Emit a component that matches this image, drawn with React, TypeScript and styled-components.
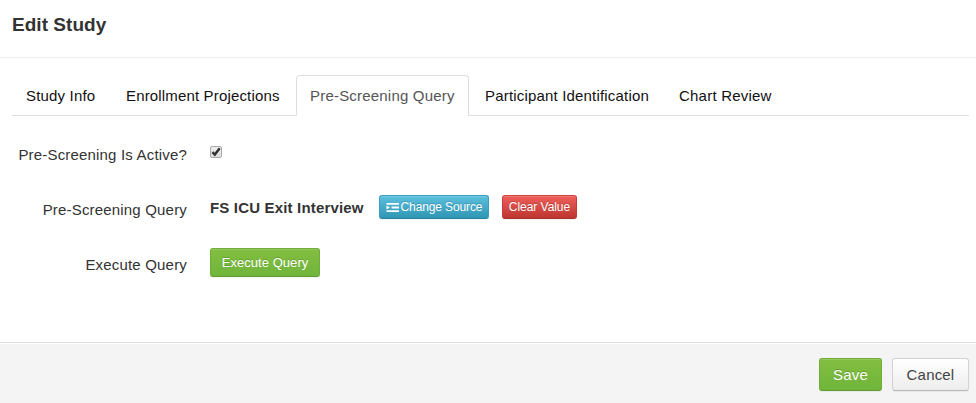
import React from "react";
import styled, { createGlobalStyle, css } from "styled-components";

const GlobalStyle = createGlobalStyle`
  * { box-sizing: border-box; }
  body {
    margin: 0;
    background: #fff;
    color: #333;
    font: 15px/20px "Liberation Sans", Arial, sans-serif;
  }
`;

const Page = styled.div`
  display: flex;
  flex-direction: column;
  height: 403px;
  overflow: hidden;
`;

const Header = styled.header`
  height: 58px;
  padding: 10px 12px 0;
  border-bottom: 1px solid #eee;
`;

const Title = styled.h3`
  margin: 0;
  font-size: 19px;
  line-height: 29px;
  font-weight: bold;
  letter-spacing: 0.04px;
`;

const Text = styled.span<{ $spacing?: number }>`
  letter-spacing: ${(p) => p.$spacing ?? 0.18}px;
  white-space: nowrap;
`;

const Tabs = styled.nav`
  display: flex;
  height: 41px;
  margin: 17px 7px 0 12px;
  border-bottom: 1px solid #ddd;
`;

const Tab = styled.a<{ $active?: boolean; $width: number }>`
  width: ${(p) => p.$width}px;
  height: 41px;
  margin-right: 2px;
  padding: 10px 0 0 13px;
  border: 1px solid transparent;
  border-radius: 4px 4px 0 0;
  color: #111;
  ${(p) =>
    p.$active &&
    css`
      color: #555;
      background: #fff;
      border-color: #ddd #ddd #fff;
    `}
`;

const Form = styled.main`
  flex: 1;
  padding-top: 26px;
`;

const Row = styled.div`
  display: flex;
  align-items: flex-start;
  height: 55px;
`;

const Label = styled.label`
  width: 187px;
  margin-right: 23px;
  padding-top: 3px;
  text-align: right;
`;

const Controls = styled.div<{ $top?: number }>`
  display: flex;
  align-items: flex-start;
  margin-top: ${(p) => p.$top ?? 0}px;
`;

const CheckBox = styled.span`
  display: block;
  width: 12px;
  height: 12px;
  border: 1px solid #aaa;
  border-radius: 2px;
  background: linear-gradient(#eee, #dedede);
  svg {
    display: block;
    overflow: visible;
  }
`;

const Value = styled.strong`
  width: 169px;
  padding-top: 3px;
  white-space: nowrap;
`;

const tones = {
  info: "border-color:#3a9fbc #3a9fbc #2a86a0;background:linear-gradient(#5bc0de,#2f96b4);color:#fff;",
  danger: "border-color:#ce4540 #c53d38 #a9302b;background:linear-gradient(#ee5f5b,#bd362f);color:#fff;",
  success: "border-color:#70ad38 #70ad38 #629b2f;background:linear-gradient(#83be40,#70b53b);color:#fff;",
  plain: "border-color:#d2d2d2 #d2d2d2 #b8b8b8;background:linear-gradient(#fff,#ededed);color:#444;",
};

const Button = styled.button<{
  $tone: keyof typeof tones;
  $width: number;
  $height: number;
  $size: number;
}>`
  display: flex;
  align-items: center;
  justify-content: center;
  gap: 2px;
  width: ${(p) => p.$width}px;
  height: ${(p) => p.$height}px;
  padding: 0;
  border: 1px solid;
  border-radius: 3px;
  font: ${(p) => p.$size}px/18px "Liberation Sans", Arial, sans-serif;
  ${(p) => tones[p.$tone]}
  box-shadow: inset 0 1px 0 rgba(255, 255, 255, 0.15), 0 1px 1px rgba(0, 0, 0, 0.05);
  text-shadow: ${(p) => (p.$tone === "plain" ? "none" : "0 -1px 0 rgba(0,0,0,.18)")};
  & + & {
    margin-left: 13px;
  }
`;

const Footer = styled.footer`
  display: flex;
  justify-content: flex-end;
  height: 61px;
  padding: 15px 7px 0 0;
  background: #f4f4f4;
  border-top: 1px solid #ddd;
  box-shadow: inset 0 1px 0 #fff;
  ${Button} + ${Button} {
    margin-left: 10px;
  }
`;

const IndentIcon = () => (
  <svg width="13" height="9" viewBox="0 0 13 9" fill="#fff" aria-hidden="true">
    <path d="M.5 0H13v1.7H.5zM5.5 3.4H13v2.2H5.5zM.5 7.3H13V9H.5zM.5 2.5 4 4.5.5 6.5z" />
  </svg>
);

const tabs = [
  { name: "Study Info", width: 98, spacing: 0.17 },
  { name: "Enrollment Projections", width: 182, spacing: 0.16 },
  { name: "Pre-Screening Query", width: 173, spacing: 0.2, active: true },
  { name: "Participant Identification", width: 192, spacing: 0.18 },
  { name: "Chart Review", width: 120, spacing: 0.22 },
];

export default function App() {
  return (
    <Page>
      <GlobalStyle />
      <Header>
        <Title>Edit Study</Title>
      </Header>
      <Tabs>
        {tabs.map((t) => (
          <Tab key={t.name} $width={t.width} $active={t.active}>
            <Text $spacing={t.spacing}>{t.name}</Text>
          </Tab>
        ))}
      </Tabs>
      <Form>
        <Row>
          <Label>
            <Text>Pre-Screening Is Active?</Text>
          </Label>
          <Controls $top={4}>
            <CheckBox role="checkbox" aria-checked="true">
              <svg width="10" height="10" viewBox="0 0 10 10" fill="none" stroke="#333" strokeWidth="2.4">
                <path d="M1.4 5.2 3.8 7.6 8.7 1.2" />
              </svg>
            </CheckBox>
          </Controls>
        </Row>
        <Row>
          <Label>
            <Text>Pre-Screening Query</Text>
          </Label>
          <Controls $top={-2}>
            <Value>
              <Text $spacing={0.17}>FS ICU Exit Interview</Text>
            </Value>
            <Button $tone="info" $width={110} $height={24} $size={12}>
              <IndentIcon />
              <Text $spacing={-0.12}>Change Source</Text>
            </Button>
            <Button $tone="danger" $width={75} $height={24} $size={12}>
              <Text $spacing={-0.05}>Clear Value</Text>
            </Button>
          </Controls>
        </Row>
        <Row>
          <Label>
            <Text>Execute Query</Text>
          </Label>
          <Controls $top={-4}>
            <Button $tone="success" $width={110} $height={29} $size={13}>
              <Text $spacing={0.05}>Execute Query</Text>
            </Button>
          </Controls>
        </Row>
      </Form>
      <Footer>
        <Button $tone="success" $width={63} $height={33} $size={15}>
          <Text>Save</Text>
        </Button>
        <Button $tone="plain" $width={77} $height={33} $size={15}>
          <Text>Cancel</Text>
        </Button>
      </Footer>
    </Page>
  );
}
